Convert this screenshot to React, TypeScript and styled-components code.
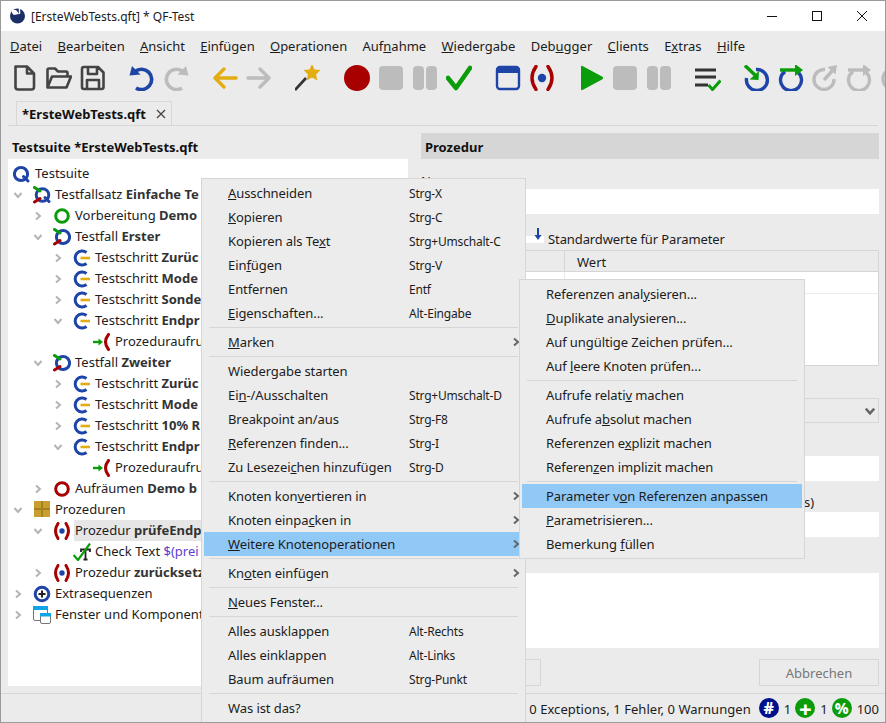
import React, { ReactNode } from "react"
import styled, { createGlobalStyle } from "styled-components"

const BLUE = "#1f44a8"
const GREEN = "#0a9c0a"
const RED = "#a80000"
const YELLOW = "#e3ac12"
const GRAY = "#bcbcbc"
const DARK = "#444"

const GlobalStyle = createGlobalStyle`
	html, body {
		margin: 0;
		padding: 0;
		background: #ebebeb;
	}
	* {
		box-sizing: border-box;
	}
`

/* ---------- tree icons ---------- */

const Ring = ({ color, cx = 9, r = 6.3 }: { color: string; cx?: number; r?: number }) => (
	<circle cx={cx} cy="9" r={r} fill="none" stroke={color} strokeWidth="3" />
)

const Strokes = () => (
	<>
		<path d="M1.5 1.5 L7 5" stroke={GREEN} strokeWidth="3" strokeLinecap="round" />
		<path d="M1.5 16 L7 12.5" stroke={RED} strokeWidth="3" strokeLinecap="round" />
	</>
)

const treeIcons: Record<string, ReactNode> = {
	suite: (
		<>
			<Ring color={BLUE} cx={8} r={6.6} />
			<path d="M10.5 11.5 L15 16" stroke={BLUE} strokeWidth="3" strokeLinecap="round" />
		</>
	),
	set: (
		<>
			<Ring color={BLUE} cx={9.5} />
			<path d="M12 11.5 L16 15.5" stroke={BLUE} strokeWidth="3" strokeLinecap="round" />
			<Strokes />
		</>
	),
	setup: <Ring color={GREEN} />,
	cleanup: <Ring color={RED} />,
	testcase: (
		<>
			<Ring color={BLUE} cx={10} r={6.6} />
			<Strokes />
		</>
	),
	step: (
		<>
			<path d="M13.5 3.5 A7 7 0 1 0 13.5 14.5" fill="none" stroke={BLUE} strokeWidth="3" />
			<path d="M7.5 9 H17" stroke={YELLOW} strokeWidth="2.6" />
		</>
	),
	call: (
		<>
			<path d="M15.5 1.5 Q9.5 9 15.5 16.5" fill="none" stroke={RED} strokeWidth="3" strokeLinecap="round" />
			<path d="M0 9 H6" stroke={GREEN} strokeWidth="2.4" />
			<path d="M5.5 5.5 L10 9 L5.5 12.5 Z" fill={GREEN} />
		</>
	),
	package: (
		<>
			<rect x="1" y="0" width="16" height="16" fill="#c89f2c" />
			<path d="M9 0 V16 M1 8 H17" stroke="#a5821f" strokeWidth="2" />
		</>
	),
	procedure: (
		<>
			<path d="M5 1.5 Q0 9 5 16.5 M13 1.5 Q18 9 13 16.5" fill="none" stroke={RED} strokeWidth="3" strokeLinecap="round" />
			<circle cx="9" cy="9" r="2.7" fill={BLUE} />
		</>
	),
	check: (
		<>
			<path d="M8 9 V6.5 H17 V9 M12.5 6.5 V16.5 M10.5 16.5 H14.5" stroke="#222" strokeWidth="1.8" fill="none" />
			<path d="M0.5 12 L5 17 L17 0.5" stroke={GREEN} strokeWidth="2.2" fill="none" />
		</>
	),
	extras: (
		<>
			<Ring color={BLUE} r={6.8} />
			<path d="M9 5.5 V12.5 M5.5 9 H12.5" stroke="#222" strokeWidth="2" />
		</>
	),
	windows: (
		<>
			<rect x="0.5" y="0.5" width="14" height="14" rx="1.5" fill="#fff" stroke="#777" />
			<rect x="0" y="0" width="15" height="4" fill="#10a5e8" />
			<rect x="7.5" y="7.5" width="10" height="10" rx="1.5" fill="#fff" stroke="#777" />
			<rect x="7" y="7" width="11" height="3.5" fill="#10a5e8" />
		</>
	),
}

/* ---------- toolbar icons ---------- */

const Stop = ({ color = GRAY }: { color?: string }) => <rect x="1" y="1" width="24" height="24" rx="4" fill={color} />

const Pause = () => (
	<>
		<rect x="1" y="1" width="11" height="24" rx="4" fill={GRAY} />
		<rect x="14" y="1" width="11" height="24" rx="4" fill={GRAY} />
	</>
)

const StepOver = ({ ring, arrow }: { ring: string; arrow: string }) => (
	<>
		<path d="M7 6.5 A10.5 10.5 0 1 0 19 6.5" fill="none" stroke={ring} strokeWidth="3.4" />
		<path d="M2 5 H18" stroke={arrow} strokeWidth="3.4" />
		<path d="M17 -1 L25 5 L17 11 Z" fill={arrow} />
	</>
)

const toolIcons: ReactNode[] = [
	<path d="M3.5 1.5 H15 L22 8.5 V22 A2.5 2.5 0 0 1 19.5 24.5 H6 A2.5 2.5 0 0 1 3.5 22 Z M15 1.5 V8.5 H22" fill="none" stroke={DARK} strokeWidth="2.6" strokeLinejoin="round" />,
	<path d="M1.5 22.5 V5 A1.5 1.5 0 0 1 3 3.5 H9 L12 6.5 H20 A1.5 1.5 0 0 1 21.5 8 V11 M1.5 22.5 L6 11.5 H25 L20.5 22.5 Z" fill="none" stroke={DARK} strokeWidth="2.6" strokeLinejoin="round" />,
	<path d="M4 2 H18 L23.5 7.5 V22 A2 2 0 0 1 21.5 24 H4 A2 2 0 0 1 2 22 V4 A2 2 0 0 1 4 2 Z M8 2.5 V9 H17 V2.5 M7 23.5 V15 H19 V23.5" fill="none" stroke={DARK} strokeWidth="2.6" strokeLinejoin="round" />,
	<>
		<path d="M6 6.5 A10.2 10.2 0 1 1 7 23" fill="none" stroke={BLUE} strokeWidth="3.6" />
		<path d="M0.5 10.5 L3 1 L11.5 9.5 Z" fill={BLUE} />
	</>,
	<>
		<path d="M20 6.5 A10.2 10.2 0 1 0 19 23" fill="none" stroke={GRAY} strokeWidth="3.6" />
		<path d="M25.5 10.5 L23 1 L14.5 9.5 Z" fill={GRAY} />
	</>,
	<path d="M24 13 H4 M12 4 L3 13 L12 22" fill="none" stroke={YELLOW} strokeWidth="3.4" strokeLinecap="round" strokeLinejoin="round" />,
	<path d="M2 13 H22 M14 4 L23 13 L14 22" fill="none" stroke={GRAY} strokeWidth="3.4" strokeLinecap="round" strokeLinejoin="round" />,
	<>
		<path d="M0 25 L11 13" stroke="#333" strokeWidth="2.6" />
		<path d="M17 -1 L19.5 4.5 L25.5 5 L21 9.5 L22.5 15.5 L17 12.5 L11.5 15.5 L13 9.5 L8.5 5 L14.5 4.5 Z" fill={YELLOW} />
	</>,
	<circle cx="13" cy="13" r="13" fill={RED} />,
	<Stop />,
	<Pause />,
	<path d="M2 13 L10 23 L24 3" fill="none" stroke={GREEN} strokeWidth="4.6" strokeLinecap="round" strokeLinejoin="round" />,
	<>
		<rect x="2" y="2" width="22" height="22" rx="3" fill="none" stroke={BLUE} strokeWidth="2.4" />
		<rect x="2" y="2" width="22" height="6" fill={BLUE} />
	</>,
	<>
		<path d="M7 1.5 Q-1 13 7 24.5 M19 1.5 Q27 13 19 24.5" fill="none" stroke={RED} strokeWidth="3.4" strokeLinecap="round" />
		<circle cx="13" cy="13" r="4.2" fill={BLUE} />
	</>,
	<path d="M3 2 A1 1 0 0 1 4.5 1 L24 11.5 A1.6 1.6 0 0 1 24 14.5 L4.5 25 A1 1 0 0 1 3 24 Z" fill={GREEN} />,
	<Stop />,
	<Pause />,
	<>
		<path d="M0 5 H21 M0 12 H21 M0 20 H13" stroke="#333" strokeWidth="3" />
		<path d="M13.5 20 L17.5 24.5 L25.5 15.5" fill="none" stroke={GREEN} strokeWidth="3" />
	</>,
	<>
		<path d="M12 4.5 A10.5 10.5 0 1 1 2.6 13" fill="none" stroke={BLUE} strokeWidth="3.4" />
		<path d="M1 0.5 L11 10" stroke={GREEN} strokeWidth="3.4" />
		<path d="M15 6 L14.5 15 L5.5 14.5 Z" fill={GREEN} />
	</>,
	<StepOver ring={BLUE} arrow={GREEN} />,
	<>
		<path d="M13 4.5 A10 10 0 1 0 22 14" fill="none" stroke={GRAY} strokeWidth="3.4" />
		<path d="M12 15 L21 5" stroke={GRAY} strokeWidth="3.4" />
		<path d="M15.5 2 L25 0 L23.5 9.5 Z" fill={GRAY} />
	</>,
	<StepOver ring={GRAY} arrow={GRAY} />,
	<circle cx="13" cy="14" r="10" fill="none" stroke={GRAY} strokeWidth="3.4" />,
]

// slot index -> extra space in front of that slot
const toolGaps = [3, 5, 7, 8, 12, 14, 17, 18]

/* ---------- data ---------- */

type Node = {
	level: number
	open?: boolean
	icon: string
	text: string
	bold?: string
	param?: string
	selected?: boolean
}

// the labels stop where the context menu covers them
const nodes: Node[] = [
	{ level: 0, icon: "suite", text: "Testsuite" },
	{ level: 1, open: true, icon: "set", text: "Testfallsatz", bold: "Einfache Te" },
	{ level: 2, open: false, icon: "setup", text: "Vorbereitung", bold: "Demo" },
	{ level: 2, open: true, icon: "testcase", text: "Testfall", bold: "Erster" },
	{ level: 3, open: false, icon: "step", text: "Testschritt", bold: "Zurüc" },
	{ level: 3, open: false, icon: "step", text: "Testschritt", bold: "Mode" },
	{ level: 3, open: false, icon: "step", text: "Testschritt", bold: "Sonde" },
	{ level: 3, open: true, icon: "step", text: "Testschritt", bold: "Endpr" },
	{ level: 4, icon: "call", text: "Prozeduraufru" },
	{ level: 2, open: true, icon: "testcase", text: "Testfall", bold: "Zweiter" },
	{ level: 3, open: false, icon: "step", text: "Testschritt", bold: "Zurüc" },
	{ level: 3, open: false, icon: "step", text: "Testschritt", bold: "Mode" },
	{ level: 3, open: false, icon: "step", text: "Testschritt", bold: "10% R" },
	{ level: 3, open: true, icon: "step", text: "Testschritt", bold: "Endpr" },
	{ level: 4, icon: "call", text: "Prozeduraufru" },
	{ level: 2, open: false, icon: "cleanup", text: "Aufräumen", bold: "Demo b" },
	{ level: 1, open: true, icon: "package", text: "Prozeduren" },
	{ level: 2, open: true, icon: "procedure", text: "Prozedur", bold: "prüfeEndp", selected: true },
	{ level: 3, icon: "check", text: "Check Text", param: "$(prei" },
	{ level: 2, open: false, icon: "procedure", text: "Prozedur", bold: "zurücksetz" },
	{ level: 1, open: false, icon: "extras", text: "Extrasequenzen" },
	{ level: 1, open: false, icon: "windows", text: "Fenster und Komponent" },
]

type Item = { label: ReactNode; keys?: string; sub?: boolean; active?: boolean } | "sep"

const mainItems: Item[] = [
	{ label: <><u>A</u>usschneiden</>, keys: "Strg-X" },
	{ label: <><u>K</u>opieren</>, keys: "Strg-C" },
	{ label: <>Kopieren als Te<u>x</u>t</>, keys: "Strg+Umschalt-C" },
	{ label: <>Ein<u>f</u>ügen</>, keys: "Strg-V" },
	{ label: "Entfernen", keys: "Entf" },
	{ label: <><u>E</u>igenschaften...</>, keys: "Alt-Eingabe" },
	"sep",
	{ label: <><u>M</u>arken</>, sub: true },
	"sep",
	{ label: "Wiedergabe starten" },
	{ label: <>Ei<u>n</u>-/Ausschalten</>, keys: "Strg+Umschalt-D" },
	{ label: "Breakpoint an/aus", keys: "Strg-F8" },
	{ label: <><u>R</u>eferenzen finden...</>, keys: "Strg-I" },
	{ label: <>Zu Lesezei<u>c</u>hen hinzufügen</>, keys: "Strg-D" },
	"sep",
	{ label: <>Knoten kon<u>v</u>ertieren in</>, sub: true },
	{ label: <>Knoten einpa<u>c</u>ken in</>, sub: true },
	{ label: <><u>W</u>eitere Knotenoperationen</>, sub: true, active: true },
	"sep",
	{ label: <>Kn<u>o</u>ten einfügen</>, sub: true },
	"sep",
	{ label: <><u>N</u>eues Fenster...</> },
	"sep",
	{ label: "Alles ausklappen", keys: "Alt-Rechts" },
	{ label: "Alles einklappen", keys: "Alt-Links" },
	{ label: "Baum aufräumen", keys: "Strg-Punkt" },
	"sep",
	{ label: "Was ist das?" },
]

const subItems: Item[] = [
	{ label: <>Referenzen anal<u>y</u>sieren...</> },
	{ label: <><u>D</u>uplikate analysieren...</> },
	{ label: <>Auf un<u>g</u>ültige Zeichen prüfen...</> },
	{ label: <>Auf <u>l</u>eere Knoten prüfen...</> },
	"sep",
	{ label: <>Aufrufe relati<u>v</u> machen</> },
	{ label: <>Aufrufe a<u>b</u>solut machen</> },
	{ label: <>Referenzen e<u>x</u>plizit machen</> },
	{ label: <>Referen<u>z</u>en implizit machen</> },
	"sep",
	{ label: <>Parameter v<u>o</u>n Referenzen anpassen</>, active: true },
	{ label: <><u>P</u>arametrisieren...</> },
	{ label: <>Bemerkung <u>f</u>üllen</> },
]

const menus: ReactNode[] = [
	<><u>D</u>atei</>,
	<><u>B</u>earbeiten</>,
	<><u>A</u>nsicht</>,
	<><u>E</u>infügen</>,
	<><u>O</u>perationen</>,
	<>Auf<u>n</u>ahme</>,
	<><u>W</u>iedergabe</>,
	<>Deb<u>u</u>gger</>,
	<><u>C</u>lients</>,
	<>E<u>x</u>tras</>,
	<><u>H</u>ilfe</>,
]

/* ---------- components ---------- */

const Chevron = ({ dir, color, size = 10 }: { dir: "right" | "down"; color: string; size?: number }) => (
	<svg width={size} height={size} viewBox="0 0 10 10">
		<path
			d={dir === "right" ? "M3 1.5 L7 5 L3 8.5" : "M1.5 3 L5 7 L8.5 3"}
			fill="none"
			stroke={color}
			strokeWidth="2"
		/>
	</svg>
)

const MenuList = ({ items }: { items: Item[] }) => (
	<>
		{items.map((item, i) =>
			item === "sep" ? (
				<MenuSep key={i} />
			) : (
				<MenuRow key={i} $active={item.active}>
					<span>{item.label}</span>
					<MenuKeys>{item.keys}</MenuKeys>
					{item.sub && <Chevron dir="right" color="#666" />}
				</MenuRow>
			)
		)}
	</>
)

const App = () => {
	return (
		<Window>
			<GlobalStyle />
			<TitleBar>
				<svg width="17" height="16" viewBox="0 0 17 16">
					<circle cx="8.5" cy="8" r="7.5" fill="#1b2f66" />
					<path d="M3 2 Q7 1 8 3 L10 6 L5 7 Q2 5 3 2 Z" fill="#fff" />
					<path d="M10.5 0 V6" stroke="#fff" strokeWidth="1.4" />
				</svg>
				<TitleText>[ErsteWebTests.qft] * QF-Test</TitleText>
				<WindowButtons>
					<svg width="12" height="12" viewBox="0 0 12 12">
						<path d="M1 6.5 H11" stroke="#111" />
					</svg>
					<svg width="12" height="12" viewBox="0 0 12 12">
						<rect x="1.5" y="1.5" width="9" height="9" fill="none" stroke="#111" />
					</svg>
					<svg width="12" height="12" viewBox="0 0 12 12">
						<path d="M1 1 L11 11 M11 1 L1 11" stroke="#111" />
					</svg>
				</WindowButtons>
			</TitleBar>

			<MenuBar>
				{menus.map((menu, i) => (
					<span key={i}>{menu}</span>
				))}
			</MenuBar>

			<ToolBar>
				{toolIcons.map((icon, i) => (
					<ToolSlot key={i} $gap={toolGaps.includes(i)}>
						<svg width="26" height="26" viewBox="0 0 26 26">
							{icon}
						</svg>
					</ToolSlot>
				))}
			</ToolBar>

			<TabStrip>
				<Tab>
					*ErsteWebTests.qft
					<svg width="10" height="10" viewBox="0 0 10 10">
						<path d="M1 1 L9 9 M9 1 L1 9" stroke="#444" strokeWidth="1.3" />
					</svg>
				</Tab>
			</TabStrip>

			<Main>
				<TreePane>
					<SuiteTitle>Testsuite *ErsteWebTests.qft</SuiteTitle>
					<Tree>
						{nodes.map((node, i) => (
							<TreeRow key={i} $level={node.level}>
								{node.level > 0 && (
									<Toggle>
										{node.open !== undefined && (
											<Chevron dir={node.open ? "down" : "right"} color="#b4b4b4" />
										)}
									</Toggle>
								)}
								<svg width="18" height="18" viewBox="0 0 18 18">
									{treeIcons[node.icon]}
								</svg>
								<TreeLabel $selected={node.selected}>
									{node.text}
									{node.bold && <b> {node.bold}</b>}
									{node.param && <TreeParam> {node.param}</TreeParam>}
								</TreeLabel>
							</TreeRow>
						))}
					</Tree>
				</TreePane>

				<DetailPane>
					<DetailHeader>Prozedur</DetailHeader>
					<FieldLabel $top={14}>Name</FieldLabel>
					<TextInput />
					<ParamLabel>
						<svg width="18" height="20" viewBox="0 0 18 20">
							<rect x="0" y="9" width="18" height="7" fill="#fff" />
							<path d="M12 1 V9" stroke={BLUE} strokeWidth="2" />
							<path d="M8.5 8 H15.5 L12 13 Z" fill={BLUE} />
						</svg>
						Standardwerte für Parameter
					</ParamLabel>
					<ParamTable>
						<TableHead>
							<span />
							<span>Wert</span>
						</TableHead>
						<TableRow>
							<span />
							<span />
						</TableRow>
					</ParamTable>
					<Select>
						<Chevron dir="down" color="#666" size={12} />
					</Select>
					<TextInput $top={33} />
					<HintLabel>s)</HintLabel>
					<TextInput />
					<TextArea />
					<ButtonRow>
						<Button />
						<Button>Abbrechen</Button>
					</ButtonRow>
				</DetailPane>
			</Main>

			<StatusBar>
				<StatusText>0 Exceptions, 1 Fehler, 0 Warnungen</StatusText>
				<Badge $color="#000f8c" $size={16}>#</Badge>
				<StatusNumber>1</StatusNumber>
				<Badge $color={GREEN} $size={22}>+</Badge>
				<StatusNumber>1</StatusNumber>
				<Badge $color={GREEN} $size={15}>%</Badge>
				<StatusNumber>100</StatusNumber>
			</StatusBar>

			<ContextMenu>
				<MenuList items={mainItems} />
			</ContextMenu>
			<SubMenu>
				<MenuList items={subItems} />
			</SubMenu>
		</Window>
	)
}

export default App

const Window = styled.div`
	position: relative;
	width: 886px;
	height: 723px;
	overflow: hidden;
	display: flex;
	flex-direction: column;
	background: #ebebeb;
	border: 1px solid #9a9a9a;
	font-family: "Noto Sans", "Open Sans", sans-serif;
	font-size: 13px;
	color: #1c1c1c;
`

const TitleBar = styled.div`
	height: 30px;
	flex: none;
	background: #fff;
	display: flex;
	align-items: center;
	padding-left: 8px;
`

const TitleText = styled.span`
	margin-left: 5px;
	font-size: 12px;
`

const WindowButtons = styled.div`
	margin-left: auto;
	display: flex;
	gap: 33px;
	padding-right: 17px;
	margin-top: -1px;
`

const MenuBar = styled.div`
	height: 30px;
	flex: none;
	display: flex;
	align-items: center;
	gap: 15.3px;
	padding-left: 9px;
`

const ToolBar = styled.div`
	height: 40px;
	flex: none;
	display: flex;
	align-items: center;
	padding: 0 0 6px 7px;
`

const ToolSlot = styled.span<{ $gap?: boolean }>`
	width: 34px;
	flex: none;
	display: flex;
	justify-content: center;
	margin-left: ${(p) => (p.$gap ? "15px" : "0")};
`

const TabStrip = styled.div`
	height: 25px;
	flex: none;
	margin: 0 7px;
	padding-left: 8px;
	border-bottom: 1px solid #d6d6d6;
`

const Tab = styled.div`
	width: 156px;
	height: 24px;
	display: flex;
	align-items: center;
	justify-content: space-between;
	padding: 0 5px;
	border: 1px solid #d8d8d8;
	border-bottom: 0;
	font-weight: 700;
	color: #111;
`

const Main = styled.div`
	flex: 1;
	min-height: 0;
	display: flex;
	gap: 13px;
	padding: 7px 7px 7px;
`

const TreePane = styled.div`
	width: 400px;
	flex: none;
	display: flex;
	flex-direction: column;
`

const SuiteTitle = styled.div`
	height: 26px;
	flex: none;
	display: flex;
	align-items: center;
	padding: 2px 0 0 4px;
	font-weight: 700;
	color: #111;
`

const Tree = styled.div`
	flex: 1;
	background: #fff;
	padding-top: 4px;
`

const TreeRow = styled.div<{ $level: number }>`
	height: 21px;
	display: flex;
	align-items: center;
	padding-left: ${(p) => (p.$level === 0 ? 5 : 5 + 20 * (p.$level - 1))}px;
	white-space: nowrap;
	svg {
		flex: none;
	}
`

const Toggle = styled.span`
	width: 20px;
	flex: none;
	display: flex;
`

const TreeLabel = styled.span<{ $selected?: boolean }>`
	height: 21px;
	line-height: 21px;
	margin-left: ${(p) => (p.$selected ? "3px" : "4px")};
	padding-left: ${(p) => (p.$selected ? "1px" : "0")};
	flex: ${(p) => (p.$selected ? "1" : "none")};
	background: ${(p) => (p.$selected ? "#e6e6e6" : "transparent")};
	b {
		color: #333;
	}
`

const TreeParam = styled.span`
	color: #5b3fd0;
`

const DetailPane = styled.div`
	width: 458px;
	flex: none;
	display: flex;
	flex-direction: column;
`

const DetailHeader = styled.div`
	height: 26px;
	flex: none;
	display: flex;
	align-items: center;
	padding: 2px 0 0 4px;
	background: #d6d6d6;
	font-weight: 700;
	color: #111;
`

const FieldLabel = styled.div<{ $top?: number }>`
	height: 16px;
	line-height: 16px;
	margin-top: ${(p) => p.$top ?? 0}px;
`

const TextInput = styled.div<{ $top?: number }>`
	height: 25px;
	flex: none;
	background: #fff;
	margin-top: ${(p) => p.$top ?? 0}px;
`

const ParamLabel = styled.div`
	height: 21px;
	margin-top: 15px;
	flex: none;
	display: flex;
	align-items: flex-start;
	gap: 4px;
	padding: 1px 0 0 105px;
	line-height: 18px;
	letter-spacing: -0.1px;
	svg {
		margin-top: -3px;
	}
`

const ParamTable = styled.div`
	height: 116px;
	flex: none;
	background: #fff;
	border: 1px solid #d6d6d6;
`

const TableHead = styled.div`
	height: 21px;
	display: grid;
	grid-template-columns: 142px 1fr;
	background: #ebebeb;
	border-bottom: 1px solid #d6d6d6;
	span + span {
		border-left: 1px solid #d6d6d6;
		padding-left: 12px;
		line-height: 22px;
	}
`

const TableRow = styled.div`
	height: 22px;
	display: grid;
	grid-template-columns: 142px 1fr;
	border-bottom: 1px solid #ebebeb;
	span + span {
		border-left: 1px solid #ebebeb;
	}
`

const Select = styled.div`
	height: 25px;
	flex: none;
	margin-top: 32px;
	display: flex;
	align-items: center;
	justify-content: flex-end;
	padding-right: 2px;
	border: 1px solid #d6d6d6;
`

const HintLabel = styled.div`
	height: 32px;
	padding: 12px 0 0 383px;
	line-height: 18px;
`

const TextArea = styled.div`
	height: 75px;
	flex: none;
	margin-top: 36px;
	background: #fff;
`

const ButtonRow = styled.div`
	margin-top: 11px;
	display: flex;
	justify-content: space-between;
`

const Button = styled.div`
	width: 120px;
	height: 27px;
	display: flex;
	align-items: center;
	justify-content: center;
	border: 1px solid #d6d6d6;
	color: #777;
`

const StatusBar = styled.div`
	height: 29px;
	flex: none;
	display: flex;
	align-items: center;
	justify-content: flex-end;
	padding-right: 6px;
	border-top: 1px solid #d6d6d6;
`

const StatusText = styled.span`
	margin-right: 4px;
	padding-top: 1px;
	letter-spacing: 0.05px;
`

const Badge = styled.span<{ $color: string; $size: number }>`
	width: 20px;
	height: 20px;
	margin-left: 4px;
	border-radius: 50%;
	display: flex;
	align-items: center;
	justify-content: center;
	background: ${(p) => p.$color};
	color: #fff;
	font-size: ${(p) => p.$size}px;
	line-height: 20px;
	font-weight: 800;
`

const StatusNumber = styled.span`
	margin-left: 5px;
	padding-top: 1px;
`

const ContextMenu = styled.div`
	position: absolute;
	left: 200px;
	top: 177px;
	width: 325px;
	padding: 2px;
	background: #ececec;
	border: 1px solid #d6d6d6;
`

const SubMenu = styled(ContextMenu)`
	left: 518px;
	top: 278px;
	width: 286px;
`

const MenuRow = styled.div<{ $active?: boolean }>`
	height: 24px;
	display: grid;
	grid-template-columns: 181px 1fr 10px;
	align-items: center;
	padding: 0 2px 0 24px;
	white-space: nowrap;
	letter-spacing: -0.08px;
	background: ${(p) => (p.$active ? "#90c8f6" : "transparent")};
`

const MenuKeys = styled.span`
	font-size: 12px;
	letter-spacing: -0.2px;
`

const MenuSep = styled.div`
	height: 1px;
	margin: 2px 5px;
	background: #d6d6d6;
`
